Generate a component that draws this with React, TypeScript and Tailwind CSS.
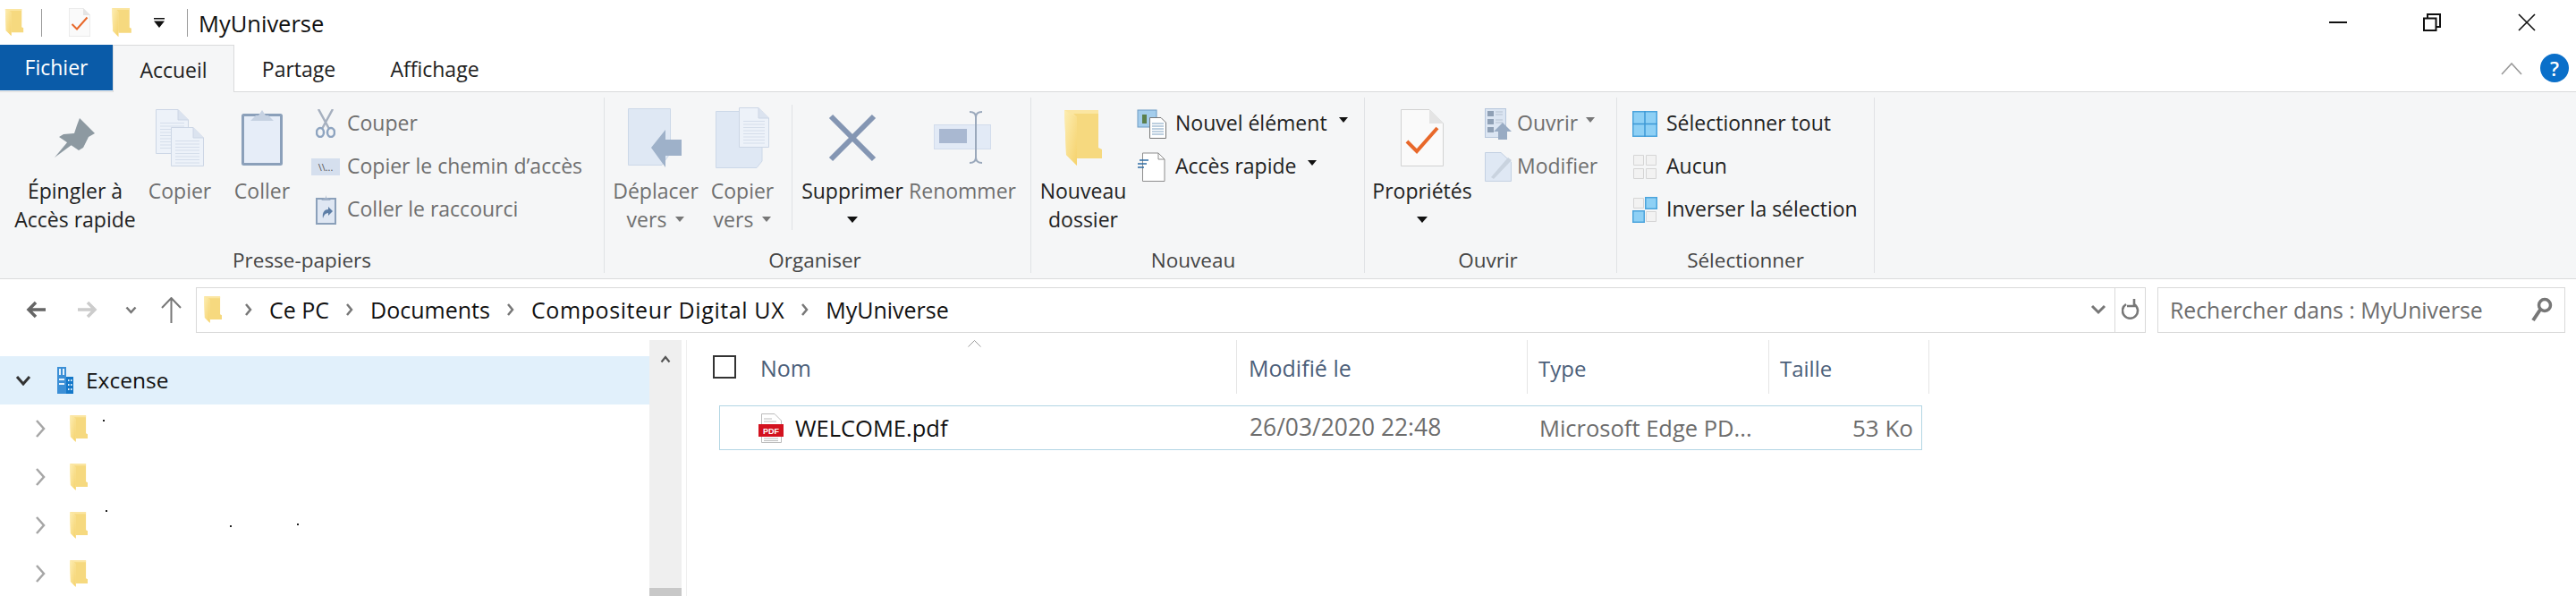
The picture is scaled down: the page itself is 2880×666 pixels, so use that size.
import type { ReactNode } from "react";

const FONT = "font-['Open_Sans','Noto_Sans',sans-serif]";

function Folder({ w = 22, h = 32 }: { w?: number; h?: number }) {
  return (
    <svg width={w} height={h} viewBox="0 0 42 62">
      <defs>
        <linearGradient id="fold" x1="0" y1="0" x2="1" y2="1">
          <stop offset="0" stopColor="#fdeeb4" />
          <stop offset="1" stopColor="#f5d26c" />
        </linearGradient>
      </defs>
      <path d="M2 0H38V42L42 44V54H14V50H2Z" fill="#f6d97f" />
      <path d="M0 0H38V4H10L14 8V62L2 50Z" fill="#fbe6a2" />
      <path d="M0 0L14 8V62L2 50Z" fill="url(#fold)" />
    </svg>
  );
}

function Caret({ muted = false, small = false }: { muted?: boolean; small?: boolean }) {
  return (
    <svg width={small ? 10 : 12} height={small ? 6 : 7} viewBox="0 0 12 7">
      <path d="M0 0H12L6 7Z" fill={muted ? "#777" : "#111"} />
    </svg>
  );
}

function CheckDoc({ w = 48, h = 64 }: { w?: number; h?: number }) {
  return (
    <svg width={w} height={h} viewBox="0 0 48 64">
      <path d="M.5.5H32L47.5 16V63.5H.5Z" fill="#fafafa" stroke="#d2d2d2" />
      <path d="M32 .5V16H47.5Z" fill="#e4e4e4" />
      <path d="M7 36L18 47L41 21" fill="none" stroke="#e8682a" strokeWidth="4" />
    </svg>
  );
}

function Pin() {
  return (
    <svg width="47" height="44" viewBox="0 0 47 44">
      <path d="M0 44L15 26L19 30Z" fill="#8d99a1" />
      <path d="M28 0L45 17L38 21L32 33L27 36L5 21L10 18L22 17L25 8Z" fill="#8d99a1" />
    </svg>
  );
}

function DocSheet({ x, y, w, h, lines }: { x: number; y: number; w: number; h: number; lines: number }) {
  return (
    <g transform={`translate(${x} ${y})`}>
      <path d={`M.5.5H${w - 12}L${w - .5} 12V${h - .5}H.5Z`} fill="#edf2f9" stroke="#ccd6e5" />
      <path d={`M${w - 12} .5V12H${w - .5}`} fill="#dbe3ef" stroke="#ccd6e5" />
      {Array.from({ length: lines }).map((_, i) => (
        <rect key={i} x={5} y={15 + i * 3.5} width={w - 10} height={1} fill="#d5deeb" />
      ))}
    </g>
  );
}

function CopyIcon() {
  return (
    <svg width="54" height="64" viewBox="0 0 54 64">
      <DocSheet x={0} y={0} w={37} h={50} lines={9} />
      <DocSheet x={17} y={20} w={37} h={44} lines={8} />
    </svg>
  );
}

function Clipboard({ w = 46, h = 62 }: { w?: number; h?: number }) {
  return (
    <svg width={w} height={h} viewBox="0 0 46 62">
      <rect x="1.5" y="5.5" width="43" height="55" rx="1" fill="#e6edf8" stroke="#8ba0ba" strokeWidth="3" />
      <path d="M10 12H36L30 6H27L23 0L19 6H16Z" fill="#c6d2e2" />
    </svg>
  );
}

function Scissors() {
  return (
    <svg width="22" height="32" viewBox="0 0 22 32">
      <path d="M3 0L15 22M19 0L7 22" stroke="#a6b0bf" strokeWidth="2.5" fill="none" />
      <ellipse cx="5" cy="26" rx="4" ry="5" fill="none" stroke="#8ea4c0" strokeWidth="2.5" />
      <ellipse cx="17" cy="26" rx="4" ry="5" fill="none" stroke="#8ea4c0" strokeWidth="2.5" />
    </svg>
  );
}

function PathIcon() {
  return (
    <div className={`flex h-[19px] w-[32px] items-center justify-center bg-[#d5dfee] text-[11px] leading-none text-[#555] ${FONT}`}>
      \\...
    </div>
  );
}

function ShortcutClip() {
  return (
    <svg width="23" height="33" viewBox="0 0 23 33">
      <rect x="1" y="4" width="21" height="28" fill="#dfe7f3" stroke="#8ba0ba" strokeWidth="2" />
      <path d="M6 6H17L13 3H12L11.5 0L11 3H10Z" fill="#9fb0c6" />
      <path d="M8 26C7 19 10 16 14 16V13L19 18L14 23V20C11 20 9 22 8 26Z" fill="#5d7ea6" />
    </svg>
  );
}

function MoveIcon() {
  return (
    <svg width="62" height="66" viewBox="0 0 62 66">
      <path d="M.5 .5H47.5V50L38 63.5H.5Z" fill="#dfe8f4" stroke="#ccd8e8" />
      <path d="M26 44L42 24V35H60V53H42V66Z" fill="#9eb1c9" />
    </svg>
  );
}

function CopyToIcon() {
  return (
    <svg width="60" height="68" viewBox="0 0 60 68">
      <path d="M.5 4.5H52V60L46 67.5H.5Z" fill="#dfe8f4" stroke="#ccd8e8" />
      <DocSheet x={26} y={0} w={34} h={45} lines={8} />
    </svg>
  );
}

function DeleteX() {
  return (
    <svg width="54" height="54" viewBox="0 0 54 54">
      <path d="M3 3L51 51M51 3L3 51" stroke="#8496b3" strokeWidth="6" />
    </svg>
  );
}

function RenameIcon() {
  return (
    <svg width="64" height="60" viewBox="0 0 64 60">
      <rect x=".5" y="15.5" width="63" height="27" fill="#e2eaf6" stroke="#d2dcec" />
      <rect x="6" y="20" width="31" height="16" fill="#a9b8d1" />
      <path d="M40 1C45 1 47 3 47 7V52C47 56 45 58 40 58M54 1C49 1 47 3 47 7M54 58C49 58 47 56 47 52" fill="none" stroke="#9aa8bb" strokeWidth="2" />
    </svg>
  );
}

function NewItemIcon() {
  return (
    <svg width="33" height="33" viewBox="0 0 33 33">
      <rect x="1" y="1" width="21" height="19" fill="#a4cdec" stroke="#6f9bc3" />
      <rect x="6" y="6" width="5" height="10" fill="#5b7f4c" />
      <path d="M14.5 9.5H27L32.5 15V32.5H14.5Z" fill="#fff" stroke="#777" />
      <path d="M17 16H30M17 19H30M17 22H30M17 25H30M17 28H30" stroke="#7da0c0" strokeWidth="1" />
    </svg>
  );
}

function QuickIcon() {
  return (
    <svg width="31" height="33" viewBox="0 0 31 33">
      <path d="M5.5 1H23L30 8V32.5H5.5Z" fill="#fff" stroke="#8d8d8d" />
      <path d="M23 1V8H30" fill="none" stroke="#8d8d8d" />
      <path d="M0 13H10M2 9H12M0 17H7" stroke="#2f6ea5" strokeWidth="1.5" />
    </svg>
  );
}

function OpenIcon() {
  return (
    <svg width="30" height="35" viewBox="0 0 30 35">
      <rect x=".5" y=".5" width="23" height="32" fill="#dbe5f2" stroke="#b7c7dc" />
      <path d="M3 3H10V9H3ZM3 12H10V18H3ZM3 21H10V27H3Z" fill="#8fa0b5" />
      <path d="M12 4H20M12 7H20M12 13H20M12 16H20" stroke="#b5c1d1" />
      <path d="M20 16L30 26H25V35H15V26H10Z" fill="#98abc3" />
    </svg>
  );
}

function EditIcon() {
  return (
    <svg width="30" height="33" viewBox="0 0 30 33">
      <path d="M.5.5H18L29.5 11V32.5H.5Z" fill="#dfe8f4" stroke="#c4d1e2" />
      <path d="M7 28L26 6L30 9L10 30Z" fill="#c9d3df" />
    </svg>
  );
}

function SelectAll() {
  return (
    <svg width="28" height="29" viewBox="0 0 28 29">
      <rect x=".75" y=".75" width="26.5" height="27.5" fill="#8ed0f5" stroke="#4aa3dc" strokeWidth="1.5" />
      <path d="M14 0V29M0 14.5H28" stroke="#3d98d5" strokeWidth="1.5" />
    </svg>
  );
}

function SelectNone() {
  return (
    <svg width="28" height="29" viewBox="0 0 28 29">
      <path d="M1.5 1.5H12.5V12.5H1.5ZM15.5 1.5H26.5V12.5H15.5ZM1.5 16.5H12.5V27.5H1.5ZM15.5 16.5H26.5V27.5H15.5Z" fill="#f2f2f2" stroke="#d5d5d5" />
    </svg>
  );
}

function SelectInvert() {
  return (
    <svg width="28" height="29" viewBox="0 0 28 29">
      <path d="M1.5 1.5H12.5V12.5H1.5ZM15.5 16.5H26.5V27.5H15.5Z" fill="#f2f2f2" stroke="#d5d5d5" />
      <path d="M14 0H28V14H14ZM0 15H14V29H0Z" fill="#8ed0f5" />
      <path d="M14.75 .75H27.25V13.25H14.75ZM.75 15.75H13.25V28.25H.75Z" fill="none" stroke="#4aa3dc" strokeWidth="1.5" />
    </svg>
  );
}

function BigItem({ icon, lines, width, muted, caret }: { icon: ReactNode; lines: ReactNode[]; width: string; muted?: boolean; caret?: "inline" | "below" }) {
  return (
    <div className={`flex shrink-0 flex-col items-center ${width} ${muted ? "text-[#6f6f6f]" : "text-[#222]"}`}>
      <div className="flex h-[88px] items-center justify-center pt-[2px]">{icon}</div>
      {lines.map((l, i) => (
        <div key={i} className="flex h-[32px] items-center gap-[10px] whitespace-nowrap leading-[32px]">
          {l}
          {caret === "inline" && i === 1 && <Caret muted small />}
        </div>
      ))}
      {caret === "below" && (
        <div className="flex h-[32px] items-center justify-center">
          <Caret />
        </div>
      )}
    </div>
  );
}

function SmallItem({ icon, iconW, gap, label, muted, caret }: { icon: ReactNode; iconW: string; gap: string; label: string; muted?: boolean; caret?: boolean }) {
  return (
    <div className={`flex h-[48px] items-center whitespace-nowrap ${gap} ${muted ? "text-[#6f6f6f]" : "text-[#222]"}`}>
      <div className={`flex shrink-0 justify-center pt-[2px] ${iconW}`}>{icon}</div>
      <span>{label}</span>
      {caret && (
        <span className="mb-[6px] ml-[3px] flex">
          <Caret muted={muted} small />
        </span>
      )}
    </div>
  );
}

function Group({ width, label, labelPad = "", children }: { width: string; label: string; labelPad?: string; children: ReactNode }) {
  return (
    <div className={`flex h-[196px] shrink-0 flex-col border-r border-[#e0e2e5] ${width}`}>
      <div className="flex flex-1">{children}</div>
      <div className={`h-[28px] text-center text-[22.5px] leading-[28px] text-[#444] ${labelPad}`}>{label}</div>
    </div>
  );
}

function TreeRow({ specks }: { specks?: ReactNode }) {
  return (
    <div className="relative flex h-[54px] items-center">
      <svg className="ml-[39px]" width="12" height="22" viewBox="0 0 12 22">
        <path d="M2 2L10 11L2 20" fill="none" stroke="#a6a6a6" strokeWidth="2.5" />
      </svg>
      <div className="ml-[27px] flex">
        <Folder w={20} h={30} />
      </div>
      {specks}
    </div>
  );
}

function Speck({ className }: { className: string }) {
  return <span className={`absolute h-[2px] w-[2px] bg-[#222] ${className}`} />;
}

function Crumb() {
  return (
    <svg className="mx-[18px]" width="10" height="16" viewBox="0 0 10 16">
      <path d="M2 2L7 8L2 14" fill="none" stroke="#777" strokeWidth="2.5" />
    </svg>
  );
}

export default function App() {
  return (
    <div className={`relative h-[666px] w-[2880px] overflow-hidden bg-white text-[23px] ${FONT}`}>
      {/* title bar */}
      <div className="flex h-[50px] items-center">
        <div className="ml-[5px] flex w-[22px]">
          <Folder w={22} h={30} />
        </div>
        <div className="ml-[19px] h-[31px] w-px bg-[#999]" />
        <div className="ml-[30px] flex">
          <CheckDoc w={24} h={32} />
        </div>
        <div className="ml-[24px] flex">
          <Folder w={22} h={32} />
        </div>
        <svg className="ml-[25px]" width="12" height="11" viewBox="0 0 12 11">
          <path d="M0 0H12V1.5H0ZM0 3.5H12L6 11Z" fill="#111" />
        </svg>
        <div className="ml-[25px] h-[31px] w-px bg-[#999]" />
        <span className="ml-[12px] pt-[2px] text-[25.5px] text-[#111]">MyUniverse</span>
        <svg className="ml-auto" width="20" height="2" viewBox="0 0 20 2">
          <rect width="20" height="2" fill="#111" />
        </svg>
        <svg className="ml-[85px]" width="20" height="20" viewBox="0 0 20 20">
          <path d="M1 5.5H14.5V19H1ZM5 5V1H19V15H15" fill="none" stroke="#111" strokeWidth="2" />
        </svg>
        <svg className="ml-[86px] mr-[45px]" width="20" height="20" viewBox="0 0 20 20">
          <path d="M1 1L19 19M19 1L1 19" fill="none" stroke="#111" strokeWidth="1.6" />
        </svg>
      </div>

      {/* tabs */}
      <div className="flex h-[53px] items-start border-b border-[#dadbdc]">
        <div className="flex h-[51px] w-[126px] items-center justify-center bg-[#0a5ba8] text-white">Fichier</div>
        <div className="flex h-[53px] w-[136px] items-center justify-center border-x border-t border-[#dadbdc] bg-[#f5f6f7] pt-[2px] text-[#222]">Accueil</div>
        <div className="flex h-[51px] w-[144px] items-center justify-center pt-[3px] text-[#222]">Partage</div>
        <div className="flex h-[51px] w-[160px] items-center justify-center pt-[3px] text-[#222]">Affichage</div>
        <svg className="ml-auto mt-[20px]" width="24" height="14" viewBox="0 0 24 14">
          <path d="M1 13L12 1L23 13" fill="none" stroke="#999" strokeWidth="1.6" />
        </svg>
        <div className="ml-[20px] mr-[8px] mt-[10px] flex h-[32px] w-[32px] items-center justify-center rounded-full bg-[#0a6fc9] text-[22px] font-semibold text-white">?</div>
      </div>

      {/* ribbon */}
      <div className="flex h-[209px] items-center border-b border-[#dadbdc] bg-[#f5f6f7]">
        <Group width="w-[676px]" label="Presse-papiers">
          <BigItem width="w-[168px]" icon={<Pin />} lines={["Épingler à", "Accès rapide"]} />
          <BigItem width="w-[66px]" muted icon={<CopyIcon />} lines={["Copier"]} />
          <BigItem width="ml-[26px] w-[66px]" muted icon={<Clipboard />} lines={["Coller"]} />
          <div className="ml-[22px] pt-[4px]">
            <SmallItem muted iconW="w-[32px]" gap="gap-[8px]" icon={<Scissors />} label="Couper" />
            <SmallItem muted iconW="w-[32px]" gap="gap-[8px]" icon={<PathIcon />} label="Copier le chemin d’accès" />
            <SmallItem muted iconW="w-[32px]" gap="gap-[8px]" icon={<ShortcutClip />} label="Coller le raccourci" />
          </div>
        </Group>
        <Group width="w-[477px]" label="Organiser" labelPad="pr-[6px]">
          <BigItem width="ml-[3px] w-[108px]" muted caret="inline" icon={<MoveIcon />} lines={["Déplacer", "vers"]} />
          <BigItem width="w-[86px]" muted caret="inline" icon={<CopyToIcon />} lines={["Copier", "vers"]} />
          <div className="ml-[12px] mt-[8px] h-[140px] w-px bg-[#e0e2e5]" />
          <BigItem width="ml-[5px] w-[124px]" caret="below" icon={<DeleteX />} lines={["Supprimer"]} />
          <BigItem width="w-[122px]" muted icon={<RenameIcon />} lines={["Renommer"]} />
        </Group>
        <Group width="w-[373px]" label="Nouveau" labelPad="pr-[10px]">
          <BigItem width="ml-[3px] w-[110px]" icon={<Folder w={42} h={62} />} lines={["Nouveau", "dossier"]} />
          <div className="ml-[5px] pt-[4px]">
            <SmallItem iconW="w-[33px]" gap="gap-[10px]" icon={<NewItemIcon />} label="Nouvel élément" caret />
            <SmallItem iconW="w-[33px]" gap="gap-[10px]" icon={<QuickIcon />} label="Accès rapide" caret />
          </div>
        </Group>
        <Group width="w-[282px]" label="Ouvrir" labelPad="pr-[6px]">
          <BigItem width="ml-[10px] w-[108px]" caret="below" icon={<CheckDoc />} lines={["Propriétés"]} />
          <div className="ml-[16px] pt-[4px]">
            <SmallItem muted iconW="w-[30px]" gap="gap-[6px]" icon={<OpenIcon />} label="Ouvrir" caret />
            <SmallItem muted iconW="w-[30px]" gap="gap-[6px]" icon={<EditIcon />} label="Modifier" />
          </div>
        </Group>
        <Group width="w-[288px]" label="Sélectionner">
          <div className="ml-[17px] pt-[4px]">
            <SmallItem iconW="w-[28px]" gap="gap-[10px]" icon={<SelectAll />} label="Sélectionner tout" />
            <SmallItem iconW="w-[28px]" gap="gap-[10px]" icon={<SelectNone />} label="Aucun" />
            <SmallItem iconW="w-[28px]" gap="gap-[10px]" icon={<SelectInvert />} label="Inverser la sélection" />
          </div>
        </Group>
      </div>

      {/* address bar */}
      <div className="flex h-[68px] items-center text-[25px]">
        <svg className="ml-[29px]" width="22" height="20" viewBox="0 0 22 20">
          <path d="M11 2L3 10L11 18M3 10H22" fill="none" stroke="#666" strokeWidth="3.5" />
        </svg>
        <svg className="ml-[36px]" width="22" height="20" viewBox="0 0 22 20">
          <path d="M11 2L19 10L11 18M19 10H0" fill="none" stroke="#ccc" strokeWidth="3.5" />
        </svg>
        <svg className="ml-[31px]" width="13" height="9" viewBox="0 0 13 9">
          <path d="M1.5 1.5L6.5 7L11.5 1.5" fill="none" stroke="#777" strokeWidth="2.5" />
        </svg>
        <svg className="ml-[27px]" width="23" height="29" viewBox="0 0 23 29">
          <path d="M1 12L11.5 1L22 12M11.5 1V29" fill="none" stroke="#777" strokeWidth="2" />
        </svg>
        <div className="ml-[16px] flex h-[51px] w-[2180px] items-center border border-[#d9d9d9]">
          <div className="ml-[8px] flex">
            <Folder w={20} h={30} />
          </div>
          <span className="ml-[7px]">
            <Crumb />
          </span>
          <span className="pt-[2px] text-[#111]">Ce PC</span>
          <Crumb />
          <span className="pt-[2px] text-[#111]">Documents</span>
          <Crumb />
          <span className="pt-[2px] tracking-[0.6px] text-[#111]">Compositeur Digital UX</span>
          <Crumb />
          <span className="pt-[2px] text-[#111]">MyUniverse</span>
          <svg className="ml-auto mr-[9px]" width="18" height="12" viewBox="0 0 18 12">
            <path d="M2 2L9 9L16 2" fill="none" stroke="#777" strokeWidth="3" />
          </svg>
          <div className="flex h-full w-[34px] items-center justify-center border-l border-[#d9d9d9]">
            <svg width="20" height="25" viewBox="0 0 20 25">
              <path d="M5 6A8.5 8.5 0 1 0 14 6M14 0V8H6" fill="none" stroke="#777" strokeWidth="2.6" />
            </svg>
          </div>
        </div>
        <div className="ml-[13px] flex h-[51px] w-[456px] items-center justify-between border border-[#d9d9d9] pl-[13px] pr-[13px] text-[#6d6d6d]">
          <span className="pt-[2px] text-[24.8px]">Rechercher dans : MyUniverse</span>
          <svg width="24" height="28" viewBox="0 0 24 28">
            <circle cx="15" cy="9" r="6.5" fill="none" stroke="#777" strokeWidth="3.5" />
            <path d="M10 14L2 26" stroke="#777" strokeWidth="4" />
          </svg>
        </div>
      </div>

      {/* body */}
      <div className="flex h-[286px] text-[25px]">
        <div className="w-[726px] shrink-0 pt-[18px]">
          <div className="flex h-[54px] items-center bg-[#e1f0fb] text-[#111]">
            <svg className="ml-[17px]" width="18" height="12" viewBox="0 0 18 12">
              <path d="M2 2L9 10L16 2" fill="none" stroke="#333" strokeWidth="3" />
            </svg>
            <svg className="ml-[29px]" width="18" height="30" viewBox="0 0 18 30">
              <path d="M0 0H10V30H0Z" fill="#3b8fd6" />
              <path d="M10 11H18V30H10Z" fill="#1478c9" />
              <path d="M2 2H4V9H2ZM6 2H8V9H6ZM2 13H8V15H2ZM2 18H8V20H2ZM12 14H13.5V16H12ZM15 14H16.5V16H15ZM12 19H13.5V21H12ZM15 19H16.5V21H15ZM12 24H13.5V26H12ZM15 24H16.5V26H15Z" fill="#e4f1fb" />
            </svg>
            <span className="ml-[14px] text-[24.5px]">Excense</span>
          </div>
          <TreeRow specks={<Speck className="left-[115px] top-[17px]" />} />
          <TreeRow />
          <TreeRow
            specks={
              <>
                <Speck className="left-[118px] top-[10px]" />
                <Speck className="left-[257px] top-[27px]" />
                <Speck className="left-[332px] top-[25px]" />
              </>
            }
          />
          <TreeRow />
        </div>
        <div className="flex w-[36px] shrink-0 flex-col items-center justify-between bg-[#efefef]">
          <svg className="mt-[17px]" width="12" height="9" viewBox="0 0 12 9">
            <path d="M1.5 7.5L6 2L10.5 7.5" fill="none" stroke="#555" strokeWidth="2.2" />
          </svg>
          <div className="h-[9px] w-full bg-[#c8c8c8]" />
        </div>
        <div className="ml-[5px] w-px shrink-0 bg-[#efefef]" />
        <div className="relative w-[1400px]">
          {/* header */}
          <div className="flex h-[60px] text-[#4c607a]">
            <div className="relative flex w-[615px] items-center border-r border-[#e5e5e5] pt-[3px]">
              <div className="mb-[3px] ml-[29px] h-[26px] w-[26px] border-2 border-[#333]" />
              <span className="ml-[27px]">Nom</span>
              <svg className="absolute left-[314px] top-0" width="15" height="8" viewBox="0 0 15 8">
                <path d="M.5 7.5L7.5 .5L14.5 7.5" fill="none" stroke="#999" />
              </svg>
            </div>
            <div className="flex w-[325px] items-center border-r border-[#e5e5e5] pl-[13px] pt-[3px]">Modifié le</div>
            <div className="flex w-[270px] items-center border-r border-[#e5e5e5] pl-[12px] pt-[3px] text-[24px]">Type</div>
            <div className="flex w-[179px] items-center border-r border-[#e5e5e5] pl-[12px] pt-[3px] text-[24px]">Taille</div>
          </div>
          {/* file row */}
          <div className="ml-[36px] mt-[13px] flex h-[50px] w-[1345px] items-center border border-[#b3d6e4]">
            <svg className="ml-[43px]" width="28" height="33" viewBox="0 0 28 33">
              <path d="M3.5.5H18L25.5 8V32.5H3.5Z" fill="#fff" stroke="#bbb" />
              <path d="M6 6H15M6 9H20M6 28H22M6 30.5H22" stroke="#bbb" />
              <rect x="0" y="12" width="28" height="14" fill="#d3121f" />
              <text x="14" y="22.5" textAnchor="middle" fontSize="9" fill="#fff" fontFamily="Liberation Sans, sans-serif" fontWeight="700">PDF</text>
            </svg>
            <span className="ml-[13px] w-[508px] text-[25.5px] text-[#111]">WELCOME.pdf</span>
            <span className="w-[324px] text-[26.4px] text-[#6d6d6d]">26/03/2020 22:48</span>
            <span className="w-[256px] whitespace-nowrap text-[25.5px] text-[#6d6d6d]">Microsoft Edge PD...</span>
            <span className="ml-auto mr-[9px] text-[26px] text-[#6d6d6d]">53 Ko</span>
          </div>
        </div>
      </div>
    </div>
  );
}
